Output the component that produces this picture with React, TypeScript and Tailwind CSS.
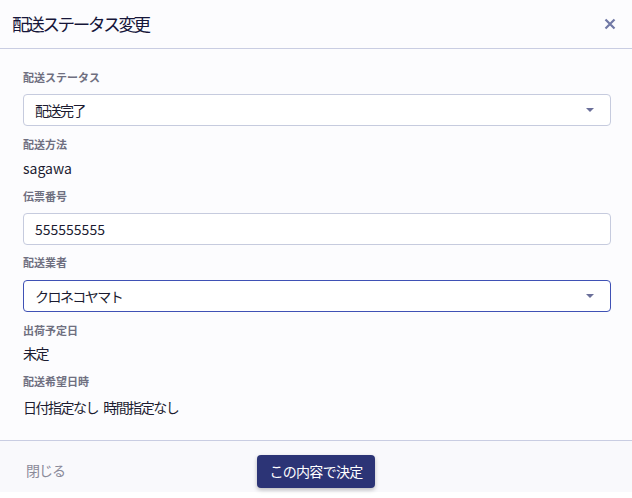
import React from "react";

const jp = { fontFamily: '"Noto Sans CJK JP", "Noto Sans", sans-serif' };

function Label({ children, className }: { children: React.ReactNode; className?: string }) {
  return <div className={`h-4 text-[11px] leading-4 font-bold text-[#6f6f80] ${className ?? ""}`}>{children}</div>;
}

function Caret() {
  return (
    <svg width="8" height="4" viewBox="0 0 8 4" className="text-[#6a6f99]">
      <path d="M0 0h8L4 4z" fill="currentColor" />
    </svg>
  );
}

function SelectBox({ value, focused, className }: { value: string; focused?: boolean; className?: string }) {
  return (
    <div
      className={`flex h-8 items-center justify-between rounded-[4px] border bg-white pl-[11px] pr-[16px] text-[14px] text-[#1b1b30] ${
        focused ? "border-[#3f51b5]" : "border-[#c6cbde]"
      } ${className ?? ""}`}
    >
      <span className="tracking-[-1.5px]">{value}</span>
      <Caret />
    </div>
  );
}

export default function App() {
  return (
    <div className="w-[632px] h-[498px] bg-white" style={jp}>
      <div className="flex flex-col bg-[#fcfcfe]">
        <div className="flex h-[49px] items-center justify-between border-b border-[#c9cde2] pl-[12px] pr-[16px]">
          <h1 className="text-[17.5px] tracking-[-2.3px] text-[#16163a]">配送ステータス変更</h1>
          <svg width="12" height="12" viewBox="0 0 12 12" className="text-[#7179a6]">
            <path d="M1.5 1.5l9 9M10.5 1.5l-9 9" stroke="currentColor" strokeWidth="2.2" />
          </svg>
        </div>

        <div className="flex flex-col pl-[23px] pr-[21px] pt-5 pb-[23px]">
          <Label>配送ステータス</Label>
          <SelectBox value="配送完了" className="mt-[9px]" />

          <Label className="mt-[10px]">配送方法</Label>
          <div className="mt-[6px] h-5 text-[14px] leading-5 text-[#1b1b30]">sagawa</div>

          <Label className="mt-[10px]">伝票番号</Label>
          <div className="mt-[9px] flex h-8 items-center rounded-[4px] border border-[#c6cbde] bg-white pl-[11px] text-[14px] text-[#1b1b30]">
            555555555
          </div>

          <Label className="mt-[9px]">配送業者</Label>
          <SelectBox value="クロネコヤマト" focused className="mt-[10px]" />

          <Label className="mt-[10px]">出荷予定日</Label>
          <div className="mt-[5px] h-5 text-[14px] leading-5 tracking-[-1.5px] text-[#1b1b30]">未定</div>

          <Label className="mt-[10px]">配送希望日時</Label>
          <div className="mt-[8px] h-5 text-[14px] leading-5 tracking-[-1.5px] text-[#1b1b30]">
            日付指定なし<span className="tracking-[2px]"> </span>時間指定なし
          </div>
        </div>

        <div className="grid h-[52px] grid-cols-[1fr_auto_1fr] items-start border-t border-[#c9cde2] bg-[#f9f9fc] pt-[14px]">
          <button className="justify-self-start pl-[26px] pt-[5px] text-[14px] tracking-[-1px] text-[#8a8a99]">閉じる</button>
          <button className="h-[33px] w-[118px] rounded-[4px] bg-[#2c3476] text-[14px] tracking-[-0.7px] text-white shadow-[0_2px_4px_rgba(0,0,0,0.25)]">
            この内容で決定
          </button>
          <div />
        </div>
      </div>
    </div>
  );
}
